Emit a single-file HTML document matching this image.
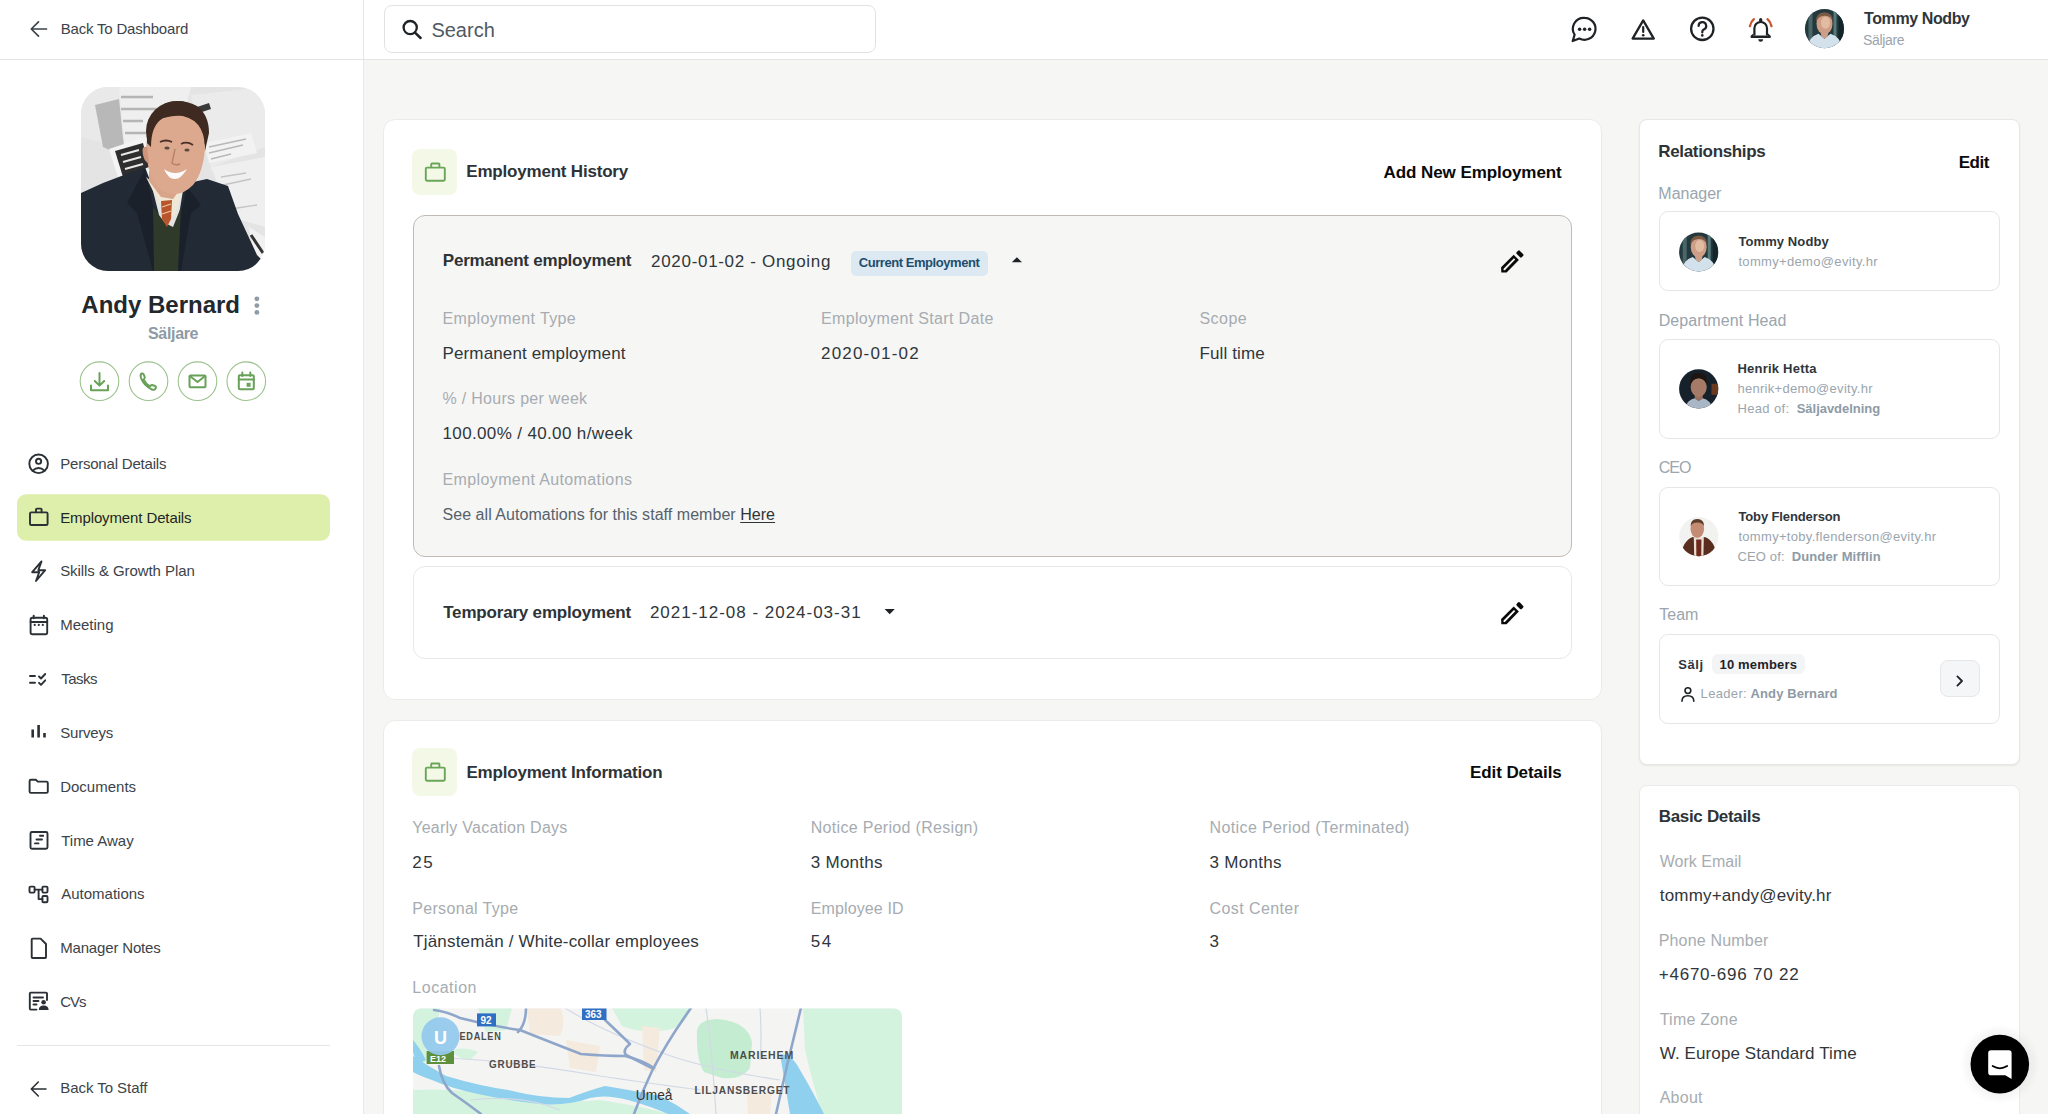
<!DOCTYPE html>
<html><head><meta charset="utf-8"><title>Employment Details</title>
<style>
html,body{margin:0;padding:0}
body{width:2048px;height:1114px;overflow:hidden;position:relative;background:#f6f6f5;font-family:"Liberation Sans",sans-serif}
.a{position:absolute;box-sizing:border-box}
.t{position:absolute;white-space:nowrap;font-family:"Liberation Sans",sans-serif}
svg{position:absolute;overflow:visible}
</style></head><body>
<!-- sidebar -->
<div class="a" style="left:0;top:0;width:364px;height:1114px;background:#fff;border-right:1px solid #e7e7e7"></div>
<!-- topbar -->
<div class="a" style="left:364px;top:0;width:1684px;height:59px;background:#fff"></div>
<div class="a" style="left:0;top:59px;width:2048px;height:1px;background:#e4e4e4"></div>
<!-- search -->
<div class="a" style="left:384px;top:5px;width:492px;height:48px;border:1px solid #e2e2e2;border-radius:8px;background:#fff"></div>
<svg style="left:0;top:0" width="2048" height="60" viewBox="0 0 2048 60">
  <!-- back arrow -->
  <path d="M46.5 29H31.5M38.5 21.8L31.3 29L38.5 36.2" fill="none" stroke="#3c4349" stroke-width="1.7" stroke-linecap="round" stroke-linejoin="round"/>
  <!-- search icon -->
  <circle cx="410.2" cy="27.6" r="6.6" fill="none" stroke="#1f2326" stroke-width="2.3"/>
  <path d="M415 32.6L420.6 38" stroke="#1f2326" stroke-width="2.5" stroke-linecap="round"/>
  <!-- chat -->
  <path d="M1584.5 17.8a11 11 0 1 1-5.2 20.7l-6.6 2.6l1.9-6.4a11 11 0 0 1 9.9-16.9z" fill="none" stroke="#1f2326" stroke-width="2.2" stroke-linejoin="round"/>
  <circle cx="1579.6" cy="29.2" r="1.75" fill="#1f2326"/><circle cx="1584.6" cy="29.2" r="1.75" fill="#1f2326"/><circle cx="1589.6" cy="29.2" r="1.75" fill="#1f2326"/>
  <!-- warning -->
  <path d="M1643.2 20.4L1653.8 38.6H1632.6Z" fill="none" stroke="#1f2326" stroke-width="2.3" stroke-linejoin="round"/>
  <path d="M1643.2 27V32" stroke="#1f2326" stroke-width="2.2" stroke-linecap="round"/><circle cx="1643.2" cy="35.2" r="1.3" fill="#1f2326"/>
  <!-- help -->
  <circle cx="1702.3" cy="28.8" r="11.2" fill="none" stroke="#1f2326" stroke-width="2.3"/>
  <path d="M1698.6 26a3.8 3.8 0 1 1 5.2 3.5c-1 .5-1.5 1.2-1.5 2.3v.6" fill="none" stroke="#1f2326" stroke-width="2.2" stroke-linecap="round"/>
  <circle cx="1702.3" cy="35.4" r="1.3" fill="#1f2326"/>
  <!-- bell -->
  <path d="M1754.4 35.6V28.3a6.3 6.3 0 0 1 12.6 0V35.6" fill="none" stroke="#1f2326" stroke-width="2.2"/>
  <path d="M1753.4 33.6L1751 35.6Q1750.6 36 1750.6 36.6V37.3Q1750.6 38.1 1751.4 38.1H1770Q1770.8 38.1 1770.8 37.3V36.6Q1770.8 36 1770.4 35.6L1768 33.6V35.4H1753.4Z" fill="#1f2326"/>
  <rect x="1759.1" y="18" width="3.2" height="4.5" rx="1.6" fill="#1f2326"/>
  <path d="M1758.2 39.3H1763.2Q1763 41.8 1760.7 41.8Q1758.4 41.8 1758.2 39.3Z" fill="#1f2326"/>
  <path d="M1749.9 26.2Q1750.9 21.6 1753.9 19.2M1771.5 26.2Q1770.5 21.6 1767.5 19.2" fill="none" stroke="#c9532e" stroke-width="2.3" stroke-linecap="round"/>
  <!-- top avatar -->
  <clipPath id="ca1"><circle cx="0" cy="0" r="19.6"/></clipPath>
  <g clip-path="url(#ca1)" transform="translate(1824.5 28.7)">
    <rect x="-21" y="-21" width="42" height="42" fill="#24393d"/>
    <rect x="-16" y="-21" width="4" height="42" fill="#4b6669"/><rect x="9" y="-21" width="3" height="42" fill="#587a7c"/><rect x="14" y="-21" width="5" height="42" fill="#13242a"/>
    <path d="M-18 21Q-16 8 -6 5L0 10L6 5Q16 8 19 21Z" fill="#d3e1ec"/>
    <path d="M-4 3H4L3 8L0 10L-3 8Z" fill="#caa08a"/>
    <ellipse cx="0" cy="-5" rx="8" ry="10.6" fill="#cf9e86"/>
    <ellipse cx="1" cy="-6" rx="4.5" ry="6" fill="#e2bba3"/>
    <path d="M-8.4 -7Q-9 -16 0 -16.5Q8.5 -16 8.2 -8Q6 -13 0 -13Q-6 -13 -8.4 -7Z" fill="#7a5a45"/>
  </g>
</svg>

<!-- avatar big -->
<svg style="left:81px;top:87px" width="184" height="184" viewBox="0 0 184 184">
  <clipPath id="cav"><rect x="0" y="0" width="184" height="184" rx="27" ry="27"/></clipPath>
  <g clip-path="url(#cav)">
    <rect width="184" height="184" fill="#e4e4e4"/>
    <path d="M0 0H60L40 60L0 50Z" fill="#e9e9e9"/>
    <path d="M14 18L38 12L44 70L22 60Z" fill="#b8b8b8"/>
    <path d="M38 0H110L100 40L70 60L44 62Z" fill="#efefef"/>
    <path d="M40 10H72M40 22H80M42 34H62M44 46H70" stroke="#b5b5b5" stroke-width="2.5"/>
    <path d="M28 62L64 50L72 90L40 100Z" fill="#f4f4f4"/>
    <path d="M34 64L62 56L68 80L42 90Z" fill="#2e2e2e"/>
    <path d="M40 68L58 63M42 75L60 70M44 82L62 77" stroke="#e8e8e8" stroke-width="2.2"/>
    <path d="M110 8L184 0V60L130 80L118 50Z" fill="#ebebeb"/>
    <path d="M116 20L128 16L130 22L118 26Z" fill="#3a3a3a"/>
    <path d="M124 56L170 46L176 66L128 76Z" fill="#f2f2f2"/>
    <path d="M128 60L165 52M128 66L162 58M130 72L150 67" stroke="#b8b8b8" stroke-width="1.6"/>
    <path d="M130 80L184 70V140L150 130Z" fill="#efefef"/>
    <path d="M140 90L165 86M142 98L170 92M150 122L176 118" stroke="#c4c4c4" stroke-width="1.4"/>
    <path d="M168 140L184 150V184H176Z" fill="#f1f1f1"/>
    <path d="M170 148L182 166" stroke="#333" stroke-width="3"/>
    <!-- suit left -->
    <path d="M0 106L22 96L64 80L70 96L78 128L74 184H0Z" fill="#222a35"/>
    <!-- suit right -->
    <path d="M103 97L126 92L147 99L157 127L176 168L184 176V184H96L98 128Z" fill="#222a35"/>
    <!-- lapel shading -->
    <path d="M64 82L46 116L56 126L72 184H78L74 128Z" fill="#1a212b"/>
    <path d="M106 100L120 118L110 126L100 184H96L100 126Z" fill="#1a212b"/>
    <!-- shirt -->
    <path d="M65 90L78 116L86 121L93 130L104 98L98 96H72Z" fill="#efe8d6"/>
    <!-- vest -->
    <path d="M72 120L84 136L92 140L100 120L97 184H73Z" fill="#2f3a2b"/>
    <!-- tie -->
    <path d="M80 114L91 113L90 132L86 140L81 132Z" fill="#b9552a"/>
    <path d="M81 120L90 117M81 127L90 124" stroke="#eec7a0" stroke-width="1.3"/>
    <!-- neck -->
    <path d="M68 84L100 84L102 98L92 112L80 110L68 94Z" fill="#d8a48a"/>
    <!-- face -->
    <ellipse cx="96" cy="44" rx="31" ry="30" fill="#3e2a20"/>
    <path d="M95 28Q124 30 124 62Q122 86 112 98Q102 108 92 107Q80 106 74 96Q66 84 65 62Q66 30 95 28Z" fill="#dca88e"/>
    <path d="M66 60Q60 58 62 68Q64 76 68 76Z" fill="#cf957a"/>
    <!-- hair -->
    <path d="M66 56Q64 26 86 16Q100 11 116 19Q128 28 128 46L124 64Q124 38 114 31Q100 26 82 31Q70 38 70 60Z" fill="#3e2a20"/>
    <!-- smile -->
    <path d="M83 82Q94 90 106 82Q100 92 94 92Q87 92 83 82Z" fill="#fbfbfb"/>
    <path d="M79 55Q85 52 91 55M100 57Q106 54 112 58" stroke="#4a3026" stroke-width="1.8" fill="none"/><ellipse cx="86" cy="61" rx="2.6" ry="1.6" fill="#5b4a40"/><ellipse cx="106" cy="63" rx="2.6" ry="1.6" fill="#5b4a40"/><path d="M94 62L91 76Q94 79 99 77" stroke="#b98068" stroke-width="1.4" fill="none"/>
  </g>
</svg>
<!-- kebab -->
<svg style="left:0;top:0" width="364" height="1114" viewBox="0 0 364 1114">
  <circle cx="256.9" cy="298.8" r="2.4" fill="#8f9ba6"/><circle cx="256.9" cy="305.6" r="2.4" fill="#8f9ba6"/><circle cx="256.9" cy="312.4" r="2.4" fill="#8f9ba6"/>
  <!-- action circles -->
  <g fill="none" stroke="#9cc28d" stroke-width="1.1">
    <circle cx="99.5" cy="381.2" r="19.3"/><circle cx="148.5" cy="381.2" r="19.3"/><circle cx="197.5" cy="381.2" r="19.3"/><circle cx="246.3" cy="381.2" r="19.3"/>
  </g>
  <g fill="none" stroke="#68a158" stroke-width="2" stroke-linecap="round" stroke-linejoin="round">
    <path d="M99.5 373V385.5M94.8 381L99.5 385.6L104.2 381M91 385.5V390.2H108V385.5"/>
    <path d="M141.5 373.5Q140 375 141 378Q144 386 152 389.5Q154.5 390.5 155.5 388.5L156 387.3Q155.8 386.2 154.5 385.8L152 385Q150.8 385.2 150 386.3Q145.5 384 143.6 379.5Q144.7 378.7 144.8 377.5L144 375Q143.5 373.6 142.4 373.4Z"/>
    <rect x="189.5" y="375.4" width="16" height="11.8" rx="1"/><path d="M189.8 376L197.5 382L205.2 376"/>
    <rect x="238.8" y="375.3" width="15" height="14" rx="1"/><path d="M238.8 379.5H253.8M242.3 372.6V376M250.3 372.6V376"/>
  </g>
  <rect x="246.6" y="382.8" width="4" height="4" fill="#6aa55a"/>
  <!-- highlight -->
  <rect x="17" y="494.3" width="313" height="46.4" rx="9" fill="#ddefab"/>
  <!-- nav icons -->
  <g fill="none" stroke="#2a3035" stroke-width="1.9" stroke-linecap="round" stroke-linejoin="round">
    <!-- personal -->
    <circle cx="38.6" cy="463.8" r="9.3"/><circle cx="38.6" cy="461.3" r="2.6"/><path d="M32.6 470.8Q38.6 465.4 44.6 470.8"/>
    <!-- briefcase -->
    <rect x="30" y="512.4" width="17.6" height="12.6" rx="1.3"/><path d="M36 512.2V509.6Q36 508.6 37 508.6H40.6Q41.6 508.6 41.6 509.6V512.2"/>
    <!-- lightning -->
    <path d="M41.5 561.4L32.2 572.2H39.2L36 581L45.2 570.2H38.3Z"/>
    <!-- calendar -->
    <rect x="30.6" y="617.8" width="16.6" height="16.4" rx="1.8"/><path d="M30.6 622H47.2M33.7 615.6V618.2M43.9 615.6V618.2"/></g><g fill="#2a3035"><circle cx="34.7" cy="624.9" r="1.1"/><circle cx="38.8" cy="624.9" r="1.1"/><circle cx="42.8" cy="624.9" r="1.1"/></g><g fill="none" stroke="#2a3035" stroke-width="1.9" stroke-linecap="round" stroke-linejoin="round">
    <!-- tasks -->
    <path d="M30 676H35M30 682.8H35M39 676.5L41 678.5L45.2 674M39 682.8L41 684.8L45.2 680.3"/>
    <!-- surveys -->
    <path d="M32.7 729.4V737.5M38.6 725V737.5M44.5 733V737.5" stroke-width="2.6" stroke-linecap="butt"/>
    <!-- folder -->
    <path d="M29.6 781Q29.6 779.7 30.9 779.7H35.8L37.8 781.6H46.5Q47.8 781.6 47.8 782.9V791.6Q47.8 792.9 46.5 792.9H30.9Q29.6 792.9 29.6 791.6Z"/>
    <!-- time away -->
    <rect x="30.5" y="832" width="17" height="16.8" rx="1.5"/><path d="M35 843.4H38.5M36.5 839.5H42M40 835.8H43.2"/>
    <!-- automations -->
    <rect x="29.5" y="886.6" width="5.1" height="6" rx="1"/><rect x="42.4" y="886.6" width="5.1" height="6" rx="1"/><rect x="42.4" y="896" width="5.1" height="6.2" rx="1"/><path d="M34.6 889.6H42.4M38.6 889.6V899.1H42.4"/>
    <!-- manager notes -->
    <path d="M32.5 938.6H40.6L46 944V957.2Q46 958 45.2 958H32.5Q31.7 958 31.7 957.2V939.4Q31.7 938.6 32.5 938.6Z"/>
    <!-- CVs -->
    <path d="M47 1000V993.6Q47 992.6 46 992.6H30.8Q29.8 992.6 29.8 993.6V1008.6Q29.8 1009.6 30.8 1009.6H36.5M33.5 997.5H43M33.5 1001H38.5M33.5 1004.5H36.5"/>
    <!-- back staff arrow -->
    <path d="M46 1089H31.6M38.3 1082L31.3 1089L38.3 1096" stroke-width="1.6"/>
  </g>
  <g fill="#2a3035"><circle cx="43.6" cy="1002.2" r="2.3"/><path d="M38.8 1010Q38.8 1005.4 43.6 1005.4Q48.6 1005.4 48.6 1010Z"/></g>
  <rect x="17" y="1045" width="313" height="1" fill="#e6e6e6"/>
</svg>

<!-- Employment History card -->
<div class="a" style="left:383px;top:118.5px;width:1218.5px;height:581px;background:#fff;border:1px solid #ebebe9;border-radius:12px"></div>
<div class="a" style="left:412.3px;top:148.6px;width:44.6px;height:46.6px;background:#f3f8e7;border-radius:8px"></div>
<div class="a" style="left:412.8px;top:215px;width:1159px;height:342px;background:#f6f6f5;border:1px solid #c2bab5;border-radius:12px"></div>
<div class="a" style="left:850.5px;top:251px;width:137.5px;height:24.5px;background:#dde9f2;border-radius:5px"></div>
<div class="a" style="left:412.8px;top:566px;width:1159px;height:93px;background:#fff;border:1px solid #e8e8e8;border-radius:12px"></div>
<!-- Employment Information card -->
<div class="a" style="left:383px;top:719.8px;width:1218.5px;height:420px;background:#fff;border:1px solid #ebebe9;border-radius:12px"></div>
<div class="a" style="left:412.3px;top:748.2px;width:44.6px;height:47.5px;background:#f3f8e7;border-radius:8px"></div>
<!-- Relationships card -->
<div class="a" style="left:1639px;top:118.6px;width:381.4px;height:646.2px;background:#fff;border:1px solid #e7e7e5;border-radius:8px;box-shadow:0 1px 2px rgba(0,0,0,0.07)"></div>
<div class="a" style="left:1659.3px;top:211.2px;width:341px;height:80.2px;background:#fff;border:1px solid #e6e6e6;border-radius:9px"></div>
<div class="a" style="left:1659.2px;top:339px;width:341px;height:100.3px;background:#fff;border:1px solid #e6e6e6;border-radius:9px"></div>
<div class="a" style="left:1659.2px;top:486.6px;width:341px;height:99.8px;background:#fff;border:1px solid #e6e6e6;border-radius:9px"></div>
<div class="a" style="left:1659.3px;top:634.3px;width:341px;height:89.8px;background:#fff;border:1px solid #e6e6e6;border-radius:9px"></div>
<div class="a" style="left:1712.2px;top:654.2px;width:92.8px;height:19.8px;background:#f3f4f6;border-radius:6px"></div>
<div class="a" style="left:1940.4px;top:660.3px;width:39.6px;height:37.2px;background:#f5f6f8;border:1px solid #e6e7ea;border-radius:8px"></div>
<!-- Basic details card -->
<div class="a" style="left:1639px;top:784.5px;width:381.4px;height:400px;background:#fff;border:1px solid #ebebe9;border-radius:8px"></div>

<svg style="left:0;top:0" width="2048" height="1114" viewBox="0 0 2048 1114">
  <!-- briefcase green icons -->
  <g fill="none" stroke="#6aa55a" stroke-width="1.9" stroke-linejoin="round">
    <rect x="425.8" y="167.6" width="19" height="13.2" rx="1.2"/><path d="M431.2 167.4V164.3Q431.2 163.5 432 163.5H438.6Q439.4 163.5 439.4 164.3V167.4"/>
    <rect x="425.8" y="767.6" width="19" height="13.2" rx="1.2"/><path d="M431.2 767.4V764.3Q431.2 763.5 432 763.5H438.6Q439.4 763.5 439.4 764.3V767.4"/>
  </g>
  <!-- caret up / down -->
  <path d="M1011.8 262.2L1016.9 257.2L1022 262.2Z" fill="#1f2326"/>
  <path d="M884.6 609L889.7 614.2L894.8 609Z" fill="#1f2326"/>
  <!-- pencils -->
  <g fill="#0a0a0a"><g transform="translate(0 0)">
    <path d="M1513.7 254.7L1518.9 259.9L1506.6 272.6H1501.3L1501.1 267.2Z M1513.96 258.26L1503.56 268.76L1503.6 270.2H1504.84L1515.24 259.54Z" fill-rule="evenodd"/>
    <rect x="-2.25" y="-3.65" width="4.5" height="7.3" rx="1.5" transform="translate(1519.9 254.0) rotate(-45)"/>
    </g><g transform="translate(0 351.7)">
    <path d="M1513.7 254.7L1518.9 259.9L1506.6 272.6H1501.3L1501.1 267.2Z M1513.96 258.26L1503.56 268.76L1503.6 270.2H1504.84L1515.24 259.54Z" fill-rule="evenodd"/>
    <rect x="-2.25" y="-3.65" width="4.5" height="7.3" rx="1.5" transform="translate(1519.9 254.0) rotate(-45)"/>
    </g></g>
  <!-- Relationship avatars -->
  <clipPath id="r1"><circle cx="0" cy="0" r="19.6"/></clipPath>
  <g clip-path="url(#r1)" transform="translate(1698.7 252)">
    <rect x="-21" y="-21" width="42" height="42" fill="#24393d"/>
    <rect x="-16" y="-21" width="4" height="42" fill="#4b6669"/><rect x="9" y="-21" width="3" height="42" fill="#587a7c"/><rect x="14" y="-21" width="5" height="42" fill="#13242a"/>
    <path d="M-18 21Q-16 8 -6 5L0 10L6 5Q16 8 19 21Z" fill="#d3e1ec"/>
    <path d="M-4 3H4L3 8L0 10L-3 8Z" fill="#caa08a"/>
    <ellipse cx="0" cy="-5" rx="8" ry="10.6" fill="#cf9e86"/>
    <ellipse cx="1" cy="-6" rx="4.5" ry="6" fill="#e2bba3"/>
    <path d="M-8.4 -7Q-9 -16 0 -16.5Q8.5 -16 8.2 -8Q6 -13 0 -13Q-6 -13 -8.4 -7Z" fill="#7a5a45"/>
  </g><clipPath id="r2"><circle cx="0" cy="0" r="19.6"/></clipPath>
  <g clip-path="url(#r2)" transform="translate(1698.7 388.8)">
    <rect x="-21" y="-21" width="42" height="42" fill="#16212b"/>
    <rect x="12.8" y="-5" width="7" height="11" fill="#6a3a20"/>
    <path d="M-14 21Q-12 11 -4 9.5L0 12L4 9.5Q12 11 14 21Z" fill="#a9b6c6"/>
    <path d="M-4 5H4L4 10L0 12L-4 10Z" fill="#9a7060"/>
    <ellipse cx="0" cy="-1.5" rx="8" ry="9.6" fill="#a57b68"/>
    <path d="M-8.6 -3Q-9.5 -16 0 -16Q9 -16 8.4 -3Q7 -10 0 -10.5Q-7 -10 -8.6 -3Z" fill="#1c1512"/>
  </g><clipPath id="r3"><circle cx="0" cy="0" r="19.6"/></clipPath>
  <g clip-path="url(#r3)" transform="translate(1698.8 536.6)">
    <rect x="-21" y="-21" width="42" height="42" fill="#f2f2f0"/>
    <path d="M-18 20Q-16 4 -6 0.5L0 3L6 0.5Q16 4 18 20L0 24Z" fill="#5a2e1e"/>
    <path d="M-5 1L5 1L4.5 24H-4.5Z" fill="#eadfd6"/>
    <path d="M-2.6 3H2.6L2.4 24H-2.4Z" fill="#6e2a1a"/>
    <ellipse cx="-1.5" cy="-8" rx="6.8" ry="9.4" fill="#c48c74"/>
    <path d="M-8.2 -10Q-8.5 -17.5 -1.5 -17.5Q5.5 -17.5 5.3 -10Q4 -14 -1.5 -14Q-7 -14 -8.2 -10Z" fill="#5e3d2c"/>
  </g>
  <!-- person icon -->
  <g fill="none" stroke="#1f2326" stroke-width="1.6" stroke-linecap="round">
    <circle cx="1687.9" cy="690.6" r="2.9"/><path d="M1682 701.2Q1682 695.8 1687.9 695.8Q1693.8 695.8 1693.8 701.2"/>
  </g>
  <path d="M1957.4 676.4L1962 681L1957.4 685.6" fill="none" stroke="#1f2326" stroke-width="1.8" stroke-linecap="round" stroke-linejoin="round"/>
  <!-- map -->
  <clipPath id="mapc"><rect x="413" y="1008.5" width="489" height="130" rx="8"/></clipPath>
  <g clip-path="url(#mapc)">
    <rect x="413" y="1008" width="489" height="110" fill="#f4f4f2"/>
    <!-- greens -->
    <path d="M803 1008H902V1114H822Q812 1080 805 1050Z" fill="#d3f3df"/>
    <path d="M612 1008H691Q686 1026 668 1030Q640 1034 622 1026Z" fill="#d3f3df"/>
    <path d="M697 1030Q700 1019 718 1019Q748 1022 752 1042L750 1068Q742 1080 722 1078L704 1072Q696 1060 697 1030Z" fill="#c4ecd0"/>
    <path d="M413 1008H440L436 1030L426 1062L413 1066Z" fill="#d3f3df"/><path d="M478 1008H512L506 1030L486 1032Z" fill="#d3f3df"/>
    <path d="M451 1050Q465 1046 478 1052L470 1060Q456 1058 451 1050Z" fill="#d3f3df"/>
    <path d="M413 1090Q460 1088 500 1096Q560 1104 600 1100Q640 1106 670 1114H413Z" fill="#d3f3df"/>
    <!-- beige -->
    <path d="M527 1008H561Q566 1024 560 1036L530 1034Z" fill="#f4ebde"/>
    <path d="M566 1040L600 1046L596 1072L570 1068Z" fill="#f4ebde"/>
    <path d="M642 1026L660 1028L656 1072L644 1070Z" fill="#f4ebde"/>
    <path d="M747 1092L772 1092L770 1114L748 1114Z" fill="#f4ebde"/>
    <!-- river -->
    <path d="M413 1056Q428 1066 446 1076Q480 1086 508 1090Q540 1098 569 1098Q590 1090 605 1086Q630 1090 660 1096Q676 1104 690 1114H668Q650 1106 628 1100Q606 1094 590 1098Q568 1106 540 1104Q505 1100 478 1094Q450 1088 432 1080Q420 1076 413 1072Z" fill="#8fd0ee"/>
    <path d="M413 1040Q420 1048 426 1060L418 1064Q414 1056 413 1052Z" fill="#8fd0ee"/>
    <path d="M780 1054Q792 1054 800 1070Q812 1090 824 1114H790Q786 1090 780 1054Z" fill="#8fd0ee"/>
    <!-- minor roads -->
    <g fill="none" stroke="#d2d9e6" stroke-width="1.2">
      <path d="M565 1008Q600 1030 660 1052Q700 1068 780 1080"/>
      <path d="M450 1058Q520 1062 600 1076Q640 1082 700 1090"/>
      <path d="M706 1008Q712 1050 716 1114"/>
      <path d="M760 1008Q762 1040 760 1060"/>
      <path d="M470 1100Q520 1094 560 1110"/>
    </g>
    <!-- major roads -->
    <g fill="none" stroke="#8fa6cb" stroke-width="2.6" stroke-linecap="round" stroke-linejoin="round">
      <path d="M434 1010Q448 1012 460 1018Q490 1026 520 1030Q555 1044 581 1054Q605 1056 625 1056Q642 1060 654 1068"/>
      <path d="M526 1008Q526 1024 518 1032"/>
      <path d="M605 1020Q620 1034 630 1044Q622 1050 626 1055Q640 1062 652 1068"/>
      <path d="M691 1008Q668 1040 652 1071Q642 1092 634 1114"/>
      <path d="M801 1008Q788 1060 776 1114"/>
      <path d="M439 1066Q442 1084 452 1093Q468 1104 481 1114"/>
    </g>
    <rect x="477" y="1013.4" width="19" height="13" fill="#2f6fc4"/>
    <rect x="582" y="1006" width="24.5" height="14" fill="#2f6fc4"/>
    <rect x="426.6" y="1051" width="27.4" height="13" fill="#5e8f3c"/>
    <circle cx="440.5" cy="1036.2" r="19" fill="#93c9ec" opacity="0.95"/>
  </g>
  <g font-family="Liberation Sans" font-weight="700" fill="#4d4d4d" font-size="11" letter-spacing="0.9">
    <text x="459.5" y="1040.3" textLength="42" lengthAdjust="spacingAndGlyphs">EDALEN</text>
    <text x="489" y="1068.4" textLength="47.5" lengthAdjust="spacingAndGlyphs">GRUBBE</text>
    <text x="730" y="1058.6" textLength="64" lengthAdjust="spacingAndGlyphs">MARIEHEM</text>
    <text x="694.4" y="1094" textLength="96" lengthAdjust="spacingAndGlyphs">LILJANSBERGET</text>
  </g>
  <text x="635.8" y="1100" font-family="Liberation Sans" font-size="15" fill="#333" textLength="36.7" lengthAdjust="spacingAndGlyphs">Umeå</text>
  <g font-family="Liberation Sans" font-weight="700" fill="#fff" font-size="10">
    <text x="480.5" y="1024">92</text><text x="585" y="1017.5">363</text><text x="430" y="1061.5" font-size="9">E12</text>
  </g>
  <text x="434" y="1043.5" font-family="Liberation Sans" font-size="18" font-weight="700" fill="#fff">U</text>
  <!-- chat button -->
  <circle cx="1999.8" cy="1064.1" r="40" fill="url(#glow)"/>
  <circle cx="1999.8" cy="1064.1" r="29.3" fill="#000"/>
  <defs><radialGradient id="glow"><stop offset="0.7" stop-color="#000" stop-opacity="0.05"/><stop offset="1" stop-color="#000" stop-opacity="0"/></radialGradient></defs><path d="M1988.2 1053Q1988.2 1050.2 1991 1050.2H2008.8Q2011.6 1050.2 2011.6 1053V1079L2005.2 1075.2H1991Q1988.2 1075.2 1988.2 1072.4Z" fill="#fff"/>
  <path d="M1992.6 1066Q1999.9 1070.6 2007.2 1066" fill="none" stroke="#000" stroke-width="1.7" stroke-linecap="round"/>
</svg>
<div class='t' style='left:60.7px;top:20.9px;font-size:15px;line-height:15px;font-weight:400;color:#3c4349;letter-spacing:-0.188px'>Back To Dashboard</div>
<div class='t' style='left:81.3px;top:293.0px;font-size:24px;line-height:24px;font-weight:700;color:#23282c;letter-spacing:0.000px'>Andy Bernard</div>
<div class='t' style='left:148.0px;top:325.5px;font-size:16px;line-height:16px;font-weight:700;color:#8e9aa5;letter-spacing:-0.333px'>Säljare</div>
<div class='t' style='left:60.2px;top:456.0px;font-size:15px;line-height:15px;font-weight:400;color:#3c4349;letter-spacing:-0.200px'>Personal Details</div>
<div class='t' style='left:60.2px;top:510.0px;font-size:15px;line-height:15px;font-weight:400;color:#1f2427;letter-spacing:-0.118px'>Employment Details</div>
<div class='t' style='left:60.2px;top:563.4px;font-size:15px;line-height:15px;font-weight:400;color:#3c4349;letter-spacing:-0.068px'>Skills &amp; Growth Plan</div>
<div class='t' style='left:60.2px;top:616.8px;font-size:15px;line-height:15px;font-weight:400;color:#3c4349;letter-spacing:0.000px'>Meeting</div>
<div class='t' style='left:61.2px;top:670.7px;font-size:15px;line-height:15px;font-weight:400;color:#3c4349;letter-spacing:-0.500px'>Tasks</div>
<div class='t' style='left:60.2px;top:725.3px;font-size:15px;line-height:15px;font-weight:400;color:#3c4349;letter-spacing:-0.167px'>Surveys</div>
<div class='t' style='left:60.2px;top:778.9px;font-size:15px;line-height:15px;font-weight:400;color:#3c4349;letter-spacing:0.000px'>Documents</div>
<div class='t' style='left:61.2px;top:832.6px;font-size:15px;line-height:15px;font-weight:400;color:#3c4349;letter-spacing:0.000px'>Time Away</div>
<div class='t' style='left:61.2px;top:886.2px;font-size:15px;line-height:15px;font-weight:400;color:#3c4349;letter-spacing:0.000px'>Automations</div>
<div class='t' style='left:60.2px;top:940.2px;font-size:15px;line-height:15px;font-weight:400;color:#3c4349;letter-spacing:-0.167px'>Manager Notes</div>
<div class='t' style='left:60.2px;top:993.5px;font-size:15px;line-height:15px;font-weight:400;color:#3c4349;letter-spacing:-1.000px'>CVs</div>
<div class='t' style='left:60.2px;top:1080.0px;font-size:15px;line-height:15px;font-weight:400;color:#3c4349;letter-spacing:-0.042px'>Back To Staff</div>
<div class='t' style='left:431.4px;top:19.6px;font-size:20px;line-height:20px;font-weight:400;color:#505a62;letter-spacing:0.000px'>Search</div>
<div class='t' style='left:1864.0px;top:11.0px;font-size:16px;line-height:16px;font-weight:700;color:#2f353a;letter-spacing:-0.400px'>Tommy Nodby</div>
<div class='t' style='left:1863.0px;top:33.1px;font-size:14px;line-height:14px;font-weight:400;color:#9aa5ae;letter-spacing:-0.333px'>Säljare</div>
<div class='t' style='left:466.3px;top:163.1px;font-size:17px;line-height:17px;font-weight:700;color:#2d3337;letter-spacing:-0.200px'>Employment History</div>
<div class='t' style='left:1383.5px;top:164.4px;font-size:17px;line-height:17px;font-weight:700;color:#0a0a0a;letter-spacing:-0.071px'>Add New Employment</div>
<div class='t' style='left:442.8px;top:252.0px;font-size:17px;line-height:17px;font-weight:700;color:#2d3337;letter-spacing:-0.211px'>Permanent employment</div>
<div class='t' style='left:651.1px;top:252.8px;font-size:17px;line-height:17px;font-weight:400;color:#30363b;letter-spacing:0.684px'>2020-01-02 - Ongoing</div>
<div class='t' style='left:858.8px;top:256.3px;font-size:13px;line-height:13px;font-weight:700;color:#1e4d6d;letter-spacing:-0.447px'>Current Employment</div>
<div class='t' style='left:442.5px;top:311.2px;font-size:16px;line-height:16px;font-weight:400;color:#a6acb1;letter-spacing:0.393px'>Employment Type</div>
<div class='t' style='left:442.5px;top:345.0px;font-size:17px;line-height:17px;font-weight:400;color:#30363b;letter-spacing:0.132px'>Permanent employment</div>
<div class='t' style='left:821.0px;top:311.2px;font-size:16px;line-height:16px;font-weight:400;color:#a6acb1;letter-spacing:0.350px'>Employment Start Date</div>
<div class='t' style='left:821.0px;top:345.0px;font-size:17px;line-height:17px;font-weight:400;color:#30363b;letter-spacing:1.189px'>2020-01-02</div>
<div class='t' style='left:1199.4px;top:311.2px;font-size:16px;line-height:16px;font-weight:400;color:#a6acb1;letter-spacing:0.500px'>Scope</div>
<div class='t' style='left:1199.4px;top:345.0px;font-size:17px;line-height:17px;font-weight:400;color:#30363b;letter-spacing:0.125px'>Full time</div>
<div class='t' style='left:442.5px;top:391.4px;font-size:16px;line-height:16px;font-weight:400;color:#a6acb1;letter-spacing:0.294px'>% / Hours per week</div>
<div class='t' style='left:442.5px;top:424.9px;font-size:17px;line-height:17px;font-weight:400;color:#30363b;letter-spacing:0.362px'>100.00% / 40.00 h/week</div>
<div class='t' style='left:442.5px;top:471.8px;font-size:16px;line-height:16px;font-weight:400;color:#a6acb1;letter-spacing:0.381px'>Employment Automations</div>
<div class='t' style='left:442.5px;top:507.0px;font-size:16px;line-height:16px;font-weight:400;color:#56626b;letter-spacing:0.044px'>See all Automations for this staff member <u style='color:#2e3439;text-underline-offset:2px'>Here</u></div>
<div class='t' style='left:443.2px;top:604.1px;font-size:17px;line-height:17px;font-weight:700;color:#2d3337;letter-spacing:-0.189px'>Temporary employment</div>
<div class='t' style='left:649.9px;top:604.0px;font-size:17px;line-height:17px;font-weight:400;color:#30363b;letter-spacing:0.986px'>2021-12-08 - 2024-03-31</div>
<div class='t' style='left:466.4px;top:763.5px;font-size:17px;line-height:17px;font-weight:700;color:#2d3337;letter-spacing:-0.190px'>Employment Information</div>
<div class='t' style='left:1469.9px;top:764.2px;font-size:17px;line-height:17px;font-weight:700;color:#0a0a0a;letter-spacing:-0.064px'>Edit Details</div>
<div class='t' style='left:412.2px;top:820.2px;font-size:16px;line-height:16px;font-weight:400;color:#a6acb1;letter-spacing:0.253px'>Yearly Vacation Days</div>
<div class='t' style='left:412.2px;top:853.5px;font-size:17px;line-height:17px;font-weight:400;color:#30363b;letter-spacing:1.500px'>25</div>
<div class='t' style='left:810.7px;top:820.2px;font-size:16px;line-height:16px;font-weight:400;color:#a6acb1;letter-spacing:0.310px'>Notice Period (Resign)</div>
<div class='t' style='left:810.7px;top:853.5px;font-size:17px;line-height:17px;font-weight:400;color:#30363b;letter-spacing:0.286px'>3 Months</div>
<div class='t' style='left:1209.6px;top:820.2px;font-size:16px;line-height:16px;font-weight:400;color:#a6acb1;letter-spacing:0.376px'>Notice Period (Terminated)</div>
<div class='t' style='left:1209.6px;top:853.5px;font-size:17px;line-height:17px;font-weight:400;color:#30363b;letter-spacing:0.286px'>3 Months</div>
<div class='t' style='left:412.2px;top:900.5px;font-size:16px;line-height:16px;font-weight:400;color:#a6acb1;letter-spacing:0.333px'>Personal Type</div>
<div class='t' style='left:413.2px;top:933.4px;font-size:17px;line-height:17px;font-weight:400;color:#30363b;letter-spacing:0.176px'>Tjänstemän / White-collar employees</div>
<div class='t' style='left:810.7px;top:900.5px;font-size:16px;line-height:16px;font-weight:400;color:#a6acb1;letter-spacing:0.130px'>Employee ID</div>
<div class='t' style='left:810.7px;top:932.5px;font-size:17px;line-height:17px;font-weight:400;color:#30363b;letter-spacing:1.500px'>54</div>
<div class='t' style='left:1209.6px;top:900.5px;font-size:16px;line-height:16px;font-weight:400;color:#a6acb1;letter-spacing:0.400px'>Cost Center</div>
<div class='t' style='left:1209.6px;top:932.5px;font-size:17px;line-height:17px;font-weight:400;color:#30363b;letter-spacing:0.000px'>3</div>
<div class='t' style='left:412.3px;top:980.3px;font-size:16px;line-height:16px;font-weight:400;color:#a6acb1;letter-spacing:0.529px'>Location</div>
<div class='t' style='left:1658.3px;top:142.9px;font-size:17px;line-height:17px;font-weight:700;color:#2d3337;letter-spacing:-0.333px'>Relationships</div>
<div class='t' style='left:1958.7px;top:153.6px;font-size:17px;line-height:17px;font-weight:700;color:#0a0a0a;letter-spacing:-0.433px'>Edit</div>
<div class='t' style='left:1658.3px;top:185.5px;font-size:16px;line-height:16px;font-weight:400;color:#9aa5ae;letter-spacing:0.000px'>Manager</div>
<div class='t' style='left:1738.4px;top:234.7px;font-size:13px;line-height:13px;font-weight:700;color:#2f353a;letter-spacing:0.100px'>Tommy Nodby</div>
<div class='t' style='left:1738.4px;top:254.9px;font-size:13px;line-height:13px;font-weight:400;color:#9aa5ae;letter-spacing:0.333px'>tommy+demo@evity.hr</div>
<div class='t' style='left:1658.7px;top:312.5px;font-size:16px;line-height:16px;font-weight:400;color:#9aa5ae;letter-spacing:0.107px'>Department Head</div>
<div class='t' style='left:1737.4px;top:362.0px;font-size:13px;line-height:13px;font-weight:700;color:#2f353a;letter-spacing:0.236px'>Henrik Hetta</div>
<div class='t' style='left:1737.4px;top:382.2px;font-size:13px;line-height:13px;font-weight:400;color:#9aa5ae;letter-spacing:0.289px'>henrik+demo@evity.hr</div>
<div class='t' style='left:1737.4px;top:402.4px;font-size:13px;line-height:13px;font-weight:400;color:#9aa5ae;letter-spacing:0.371px'>Head of:</div>
<div class='t' style='left:1796.7px;top:402.4px;font-size:13px;line-height:13px;font-weight:700;color:#8e9aa5;letter-spacing:-0.025px'>Säljavdelning</div>
<div class='t' style='left:1658.7px;top:459.9px;font-size:16px;line-height:16px;font-weight:400;color:#9aa5ae;letter-spacing:-1.000px'>CEO</div>
<div class='t' style='left:1738.4px;top:509.7px;font-size:13px;line-height:13px;font-weight:700;color:#2f353a;letter-spacing:-0.114px'>Toby Flenderson</div>
<div class='t' style='left:1738.4px;top:529.5px;font-size:13px;line-height:13px;font-weight:400;color:#9aa5ae;letter-spacing:0.310px'>tommy+toby.flenderson@evity.hr</div>
<div class='t' style='left:1737.4px;top:549.7px;font-size:13px;line-height:13px;font-weight:400;color:#9aa5ae;letter-spacing:0.167px'>CEO of:</div>
<div class='t' style='left:1791.7px;top:549.7px;font-size:13px;line-height:13px;font-weight:700;color:#8e9aa5;letter-spacing:0.123px'>Dunder Mifflin</div>
<div class='t' style='left:1659.3px;top:607.4px;font-size:16px;line-height:16px;font-weight:400;color:#9aa5ae;letter-spacing:0.000px'>Team</div>
<div class='t' style='left:1678.3px;top:658.0px;font-size:13px;line-height:13px;font-weight:700;color:#2f353a;letter-spacing:0.567px'>Sälj</div>
<div class='t' style='left:1719.5px;top:658.0px;font-size:13px;line-height:13px;font-weight:700;color:#1f2326;letter-spacing:0.167px'>10 members</div>
<div class='t' style='left:1700.6px;top:687.3px;font-size:13px;line-height:13px;font-weight:400;color:#9aa5ae;letter-spacing:0.333px'>Leader:</div>
<div class='t' style='left:1750.6px;top:687.3px;font-size:13px;line-height:13px;font-weight:700;color:#8e9aa5;letter-spacing:0.091px'>Andy Bernard</div>
<div class='t' style='left:1658.8px;top:807.6px;font-size:17px;line-height:17px;font-weight:700;color:#2d3337;letter-spacing:-0.333px'>Basic Details</div>
<div class='t' style='left:1659.8px;top:853.9px;font-size:16px;line-height:16px;font-weight:400;color:#a6acb1;letter-spacing:0.000px'>Work Email</div>
<div class='t' style='left:1659.8px;top:886.5px;font-size:17px;line-height:17px;font-weight:400;color:#30363b;letter-spacing:0.167px'>tommy+andy@evity.hr</div>
<div class='t' style='left:1658.7px;top:933.1px;font-size:16px;line-height:16px;font-weight:400;color:#a6acb1;letter-spacing:0.182px'>Phone Number</div>
<div class='t' style='left:1658.7px;top:965.7px;font-size:17px;line-height:17px;font-weight:400;color:#30363b;letter-spacing:0.786px'>+4670-696 70 22</div>
<div class='t' style='left:1659.7px;top:1011.5px;font-size:16px;line-height:16px;font-weight:400;color:#a6acb1;letter-spacing:0.250px'>Time Zone</div>
<div class='t' style='left:1659.7px;top:1044.5px;font-size:17px;line-height:17px;font-weight:400;color:#30363b;letter-spacing:0.105px'>W. Europe Standard Time</div>
<div class='t' style='left:1659.7px;top:1090.2px;font-size:16px;line-height:16px;font-weight:400;color:#a6acb1;letter-spacing:0.250px'>About</div>
</body></html>
